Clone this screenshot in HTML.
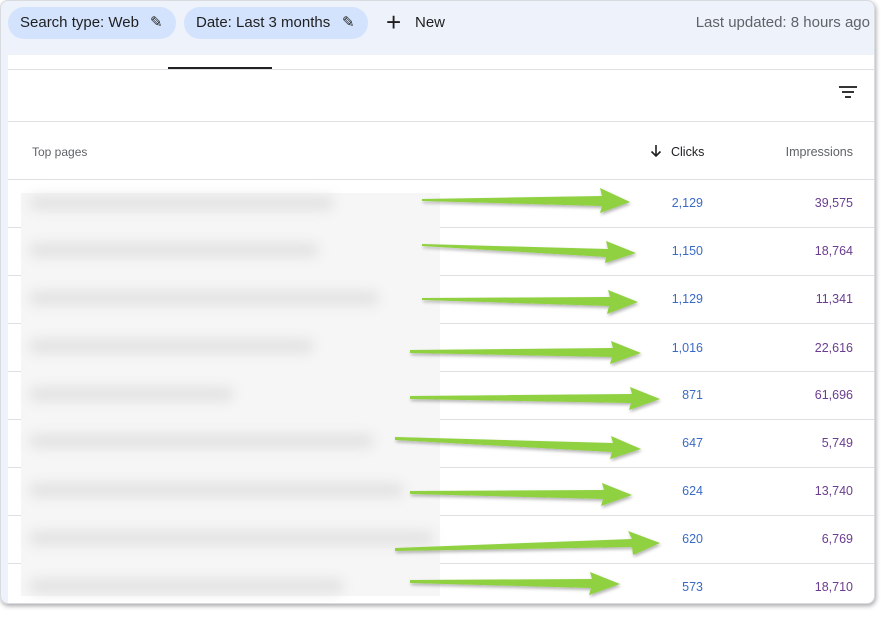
<!DOCTYPE html>
<html><head><style>
body{margin:0;width:891px;height:620px;background:#fff;font-family:"Liberation Sans",Arial,sans-serif;position:relative;overflow:hidden}
.card{position:absolute;left:0;top:0;width:875px;height:604px;border-radius:8px;background:#eef2fa;box-shadow:1px 2px 5px rgba(0,0,0,.35);overflow:hidden;border:1px solid #d8dbe0;box-sizing:border-box}
.chip{position:absolute;top:6px;height:32px;border-radius:16px;background:#d3e3fd;font-size:15px;color:#1f1f1f;line-height:32px;padding-left:12px;box-sizing:border-box}
.panel{position:absolute;left:7px;top:54px;width:868px;height:560px;background:#fff}
.hl{position:absolute;left:7px;right:0;height:1px;background:#e0e0e0}
.num{position:absolute;font-size:12.5px;text-align:right}
.c{right:171px;color:#3a6bc4}
.i{right:21px;color:#6b3d8f}
.blur{position:absolute;left:21px;top:193px;width:419px;height:403px;background:#f6f6f6}
.bl{position:absolute;height:14px;background:#e2e2e2;filter:blur(6px);border-radius:7px}
</style></head><body>
<div class="card">
<div class="chip" style="left:7px;width:168px">Search type: Web<span style="position:absolute;left:142px;top:0">✎</span></div>
<div class="chip" style="left:183px;width:184px">Date: Last 3 months<span style="position:absolute;left:158px;top:0">✎</span></div>
<div style="position:absolute;left:385px;top:7px;font-size:26px;line-height:28px;color:#1f1f1f">+</div>
<div style="position:absolute;left:414px;top:13px;font-size:15px;color:#1f1f1f">New</div>
<div style="position:absolute;right:4px;top:13px;font-size:15px;color:#5f6368">Last updated: 8 hours ago</div>
<div class="panel"></div>
<div style="position:absolute;left:167px;top:66px;width:104px;height:3px;background:#202124"></div>
<div class="hl" style="top:68px"></div>
<svg style="position:absolute;left:838px;top:84px" width="18" height="14"><path d="M0 2h18M3 7h12M6 12h6" stroke="#333" stroke-width="2"/></svg>
<div class="hl" style="top:120px"></div>
<div style="position:absolute;left:31px;top:144px;font-size:12px;color:#5f6368">Top pages</div>
<svg style="position:absolute;left:649px;top:143px" width="12" height="14"><path d="M6 1v11M1.5 7.5L6 12l4.5-4.5" stroke="#202124" stroke-width="1.6" fill="none"/></svg>
<div style="position:absolute;left:670px;top:144px;font-size:12.5px;color:#202124">Clicks</div>
<div style="position:absolute;right:21px;top:144px;font-size:12.5px;color:#5f6368">Impressions</div>
<div class="hl" style="top:178px"></div>
<div class="hl" style="top:226px"></div>
<div class="hl" style="top:274px"></div>
<div class="hl" style="top:322px"></div>
<div class="hl" style="top:370px"></div>
<div class="hl" style="top:418px"></div>
<div class="hl" style="top:466px"></div>
<div class="hl" style="top:514px"></div>
<div class="hl" style="top:562px"></div>
<div class="num c" style="top:195px">2,129</div><div class="num i" style="top:195px">39,575</div>
<div class="num c" style="top:243px">1,150</div><div class="num i" style="top:243px">18,764</div>
<div class="num c" style="top:291px">1,129</div><div class="num i" style="top:291px">11,341</div>
<div class="num c" style="top:340px">1,016</div><div class="num i" style="top:340px">22,616</div>
<div class="num c" style="top:387px">871</div><div class="num i" style="top:387px">61,696</div>
<div class="num c" style="top:435px">647</div><div class="num i" style="top:435px">5,749</div>
<div class="num c" style="top:483px">624</div><div class="num i" style="top:483px">13,740</div>
<div class="num c" style="top:531px">620</div><div class="num i" style="top:531px">6,769</div>
<div class="num c" style="top:579px">573</div><div class="num i" style="top:579px">18,710</div>
</div>
<div class="blur">
<div class="bl" style="left:8px;top:3px;width:305px"></div>
<div class="bl" style="left:8px;top:50px;width:290px"></div>
<div class="bl" style="left:8px;top:98px;width:350px"></div>
<div class="bl" style="left:8px;top:146px;width:285px"></div>
<div class="bl" style="left:8px;top:194px;width:205px"></div>
<div class="bl" style="left:8px;top:241px;width:345px"></div>
<div class="bl" style="left:8px;top:290px;width:375px"></div>
<div class="bl" style="left:8px;top:338px;width:405px"></div>
<div class="bl" style="left:8px;top:386px;width:315px"></div>
</div>
<svg style="position:absolute;left:0;top:0" width="891" height="620">
<defs><filter id="f"><feDropShadow dx="1" dy="2" stdDeviation="1.5" flood-opacity=".3"/></filter></defs>
<g fill="#8fd13f" filter="url(#f)">
<polygon points="422,199 602,196 600,188 630,202 600,213 602,206 422,201"/>
<polygon points="422,244 608,249 606,241 636,253 605,263 606,257 422,246"/>
<polygon points="422,298 610,297 608,290 638,302 607,314 609,306 422,300"/>
<polygon points="410,350 613,348 611,341 641,353 610,364 612,357 410,353"/>
<polygon points="410,396 632,394 630,387 660,399 629,410 631,403 410,399"/>
<polygon points="395,437 613,443 611,436 641,449 610,459 612,452 395,440"/>
<polygon points="410,491 604,490 602,483 632,495 601,506 603,499 410,494"/>
<polygon points="395,548 632,539 628,531 660,543 633,555 632,547 395,551"/>
<polygon points="410,580 592,579 590,572 620,584 589,595 591,588 410,583"/>
</g></svg>
</body></html>
